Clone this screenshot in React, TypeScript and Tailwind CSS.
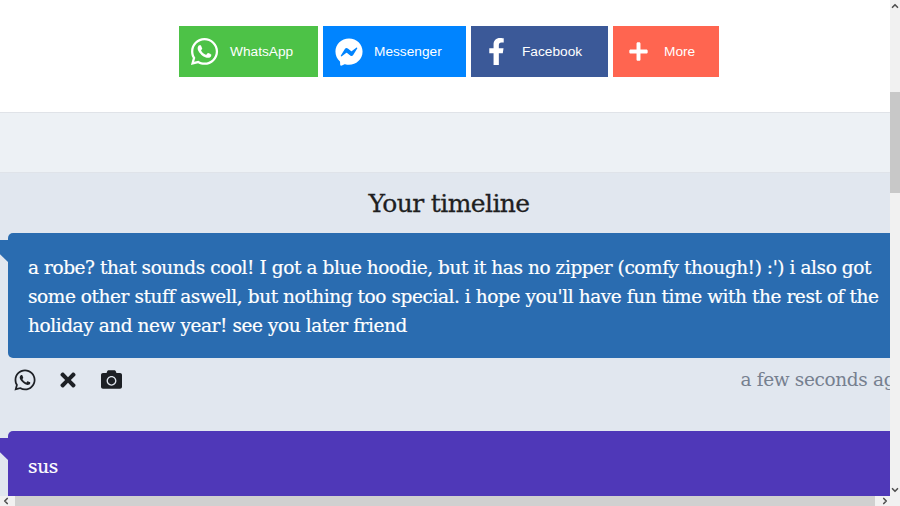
import { FaWhatsapp, FaFacebookMessenger, FaFacebookF, FaPlus, FaTimes, FaCamera } from "react-icons/fa";
import { ChevronUp, ChevronDown, ChevronLeft, ChevronRight } from "lucide-react";

const serif = "font-['DejaVu_Serif',serif]";

function ShareButton({ label, icon, className }: { label: string; icon: React.ReactNode; className: string }) {
  return (
    <a className={`flex h-[51px] items-center text-white font-['Liberation_Sans',sans-serif] text-[13.7px] ${className}`}>
      <span className="flex w-[51px] justify-center">{icon}</span>
      <span className="mt-[1px]">{label}</span>
    </a>
  );
}

function Bubble({ color, children }: { color: string; children: React.ReactNode }) {
  return (
    <div className={`relative ml-2 w-[900px] rounded-l-[5px] px-5 ${color}`}>
      <span className={`absolute -left-2 top-[7px] h-[22px] w-2 [clip-path:polygon(0_0,100%_0,100%_100%,0_65%)] ${color}`} />
      {children}
    </div>
  );
}

export default function App() {
  return (
    <div className="flex h-[506px] w-[900px] flex-col overflow-hidden bg-[#f1f1f1]">
      <div className="flex min-h-0 flex-1">
        <div className="w-[890px] overflow-hidden">
          {/* SHARE */}
          <div className="h-[113px] w-[898px] border-b border-[#e0e3e8] bg-white pt-[26px]">
            <div className="flex justify-center gap-[5px]">
              <ShareButton
                label="WhatsApp"
                className="w-[139px] bg-[#4dc247]"
                icon={<FaWhatsapp size={31} />}
              />
              <ShareButton
                label="Messenger"
                className="w-[143px] bg-[#0084ff]"
                icon={<FaFacebookMessenger size={28} />}
              />
              <ShareButton
                label="Facebook"
                className="w-[137px] bg-[#3b5998]"
                icon={<FaFacebookF size={27} />}
              />
              <ShareButton
                label="More"
                className="w-[106px] bg-[#ff6550]"
                icon={<FaPlus size={21} />}
              />
            </div>
          </div>

          <div className="h-[60px] border-b border-[#dfe3e9] bg-[#edf1f5]" />

          {/* TIMELINE */}
          <div className={`h-[323px] bg-[#e1e7ef] ${serif}`}>
            <h2 className="w-[898px] pt-[15px] text-center text-[25px] leading-[32px] tracking-[-0.6px] text-[#1f1f1f] [-webkit-text-stroke:0.3px_#1f1f1f]">
              Your timeline
            </h2>

            <div className="mt-[13px]">
              <Bubble color="bg-[#2a6cb0]">
                <p className="whitespace-nowrap pt-5 pb-[18px] text-[18.5px] leading-[29px] tracking-[-0.43px] text-white [-webkit-text-stroke:0.2px_#ffffff]">
                  a robe? that sounds cool! I got a blue hoodie, but it has no zipper (comfy though!) :') i also got
                  <br />
                  some other stuff aswell, but nothing too special. i hope you'll have fun time with the rest of the
                  <br />
                  holiday and new year! see you later friend
                </p>
              </Bubble>
            </div>

            <div className="mt-2 flex h-[42px] w-[906px] items-start pl-[13px] text-[#1d2025]">
              <FaWhatsapp size={24} className="mt-[2px]" />
              <FaTimes size={22} className="ml-[20px] mt-[3px]" />
              <FaCamera size={21} className="ml-[22px] mt-[3px]" />
              <span className="ml-auto mt-[1px] text-[18.5px] leading-[26px] tracking-[-0.35px] text-[#76808f]">
                a few seconds ago
              </span>
            </div>

            <div className="mt-[23px]">
              <Bubble color="bg-[#4f38b8]">
                <p className="pt-[21px] pb-5 text-[18.5px] leading-[29px] tracking-[-0.35px] text-white [-webkit-text-stroke:0.2px_#ffffff]">
                  sus
                </p>
              </Bubble>
            </div>
          </div>
        </div>

        {/* VERTICAL SCROLLBAR */}
        <div className="flex w-[10px] flex-col bg-[#f1f1f1] text-[#505050]">
          <ChevronUp size={10} strokeWidth={4} className="mt-[1px]" />
          <div className="mt-[81px] h-[101px] bg-[#c8c8c8]" />
          <ChevronDown size={10} strokeWidth={4} className="mt-auto mb-[1px]" />
        </div>
      </div>

      {/* HORIZONTAL SCROLLBAR */}
      <div className="flex h-[10px] items-center bg-[#f1f1f1] text-[#505050]">
        <ChevronLeft size={10} strokeWidth={4} className="ml-[1px]" />
        <div className="ml-[4px] h-full w-[860px] bg-[#d0d0d0]" />
        <ChevronRight size={10} strokeWidth={4} className="ml-[5px]" />
      </div>
    </div>
  );
}
